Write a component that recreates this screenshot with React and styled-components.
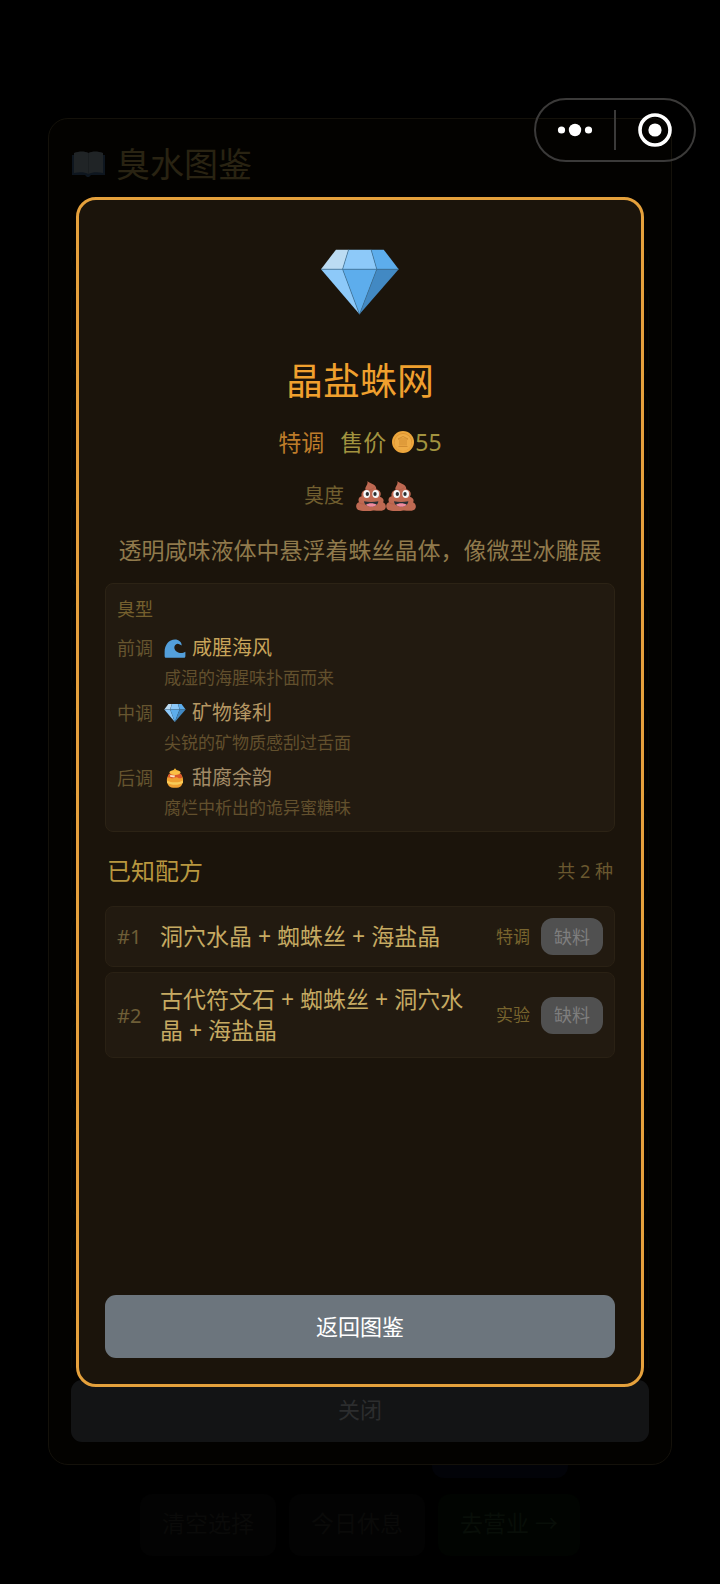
import React from 'react';
import styled, { createGlobalStyle } from 'styled-components';

const GlobalStyle = createGlobalStyle`
  * {
    box-sizing: border-box;
  }
  body {
    margin: 0;
    background: #000000;
    font-family: 'Noto Sans', 'Noto Sans CJK SC', sans-serif;
  }
  h1, h2, h3, p, ul, ol {
    margin: 0;
    padding: 0;
    font-weight: 400;
    list-style: none;
  }
  button {
    border: none;
    padding: 0;
    background: none;
    font-family: inherit;
    cursor: pointer;
  }
  svg {
    display: block;
    flex-shrink: 0;
  }
`;

const Page = styled.main`
  min-height: 100vh;
  display: flex;
  flex-direction: column;
  justify-content: flex-end;
  gap: 16px;
  padding-bottom: 28px;
`;

const BrewRow = styled.div`
  display: flex;
  justify-content: flex-end;
  padding-right: 152px;
`;

const ActionRow = styled.div`
  display: flex;
  justify-content: center;
  gap: 13px;
`;

const ActionButton = styled.button`
  min-width: 136px;
  height: 62px;
  padding: 0 22px 4px;
  border-radius: 12px;
  background: ${(props) => props.$background || '#030303'};
  color: ${(props) => props.$color || '#0a0a09'};
  font-size: 23px;
  line-height: 32px;
`;

const Overlay = styled.div`
  position: fixed;
  inset: 0;
  display: flex;
  padding: ${(props) => props.$padding};
`;

const BookPanel = styled.section`
  flex: 1;
  min-width: 0;
  display: flex;
  flex-direction: column;
  padding: 22px;
  background: #030200;
  border: 1px solid #14110a;
  border-radius: 20px;
`;

const BookHeader = styled.header`
  display: flex;
  align-items: center;
  gap: 10px;
  height: 46px;
`;

const BookTitle = styled.h1`
  font-size: 34px;
  line-height: 46px;
  color: #292312;
`;

const BookList = styled.ul`
  flex: 1;
  min-height: 0;
  overflow: hidden;
  display: flex;
  flex-direction: column;
  gap: 12px;
  margin: 58px 0 12px;
`;

const BookItem = styled.li`
  flex-shrink: 0;
  height: ${(props) => (props.$short ? '28px' : '93px')};
  border: 1px solid #030a03;
  border-radius: 12px;
`;

const CloseButton = styled.button`
  height: 62px;
  padding-bottom: 4px;
  border-radius: 11px;
  background: #131415;
  color: #2c2d2e;
  font-size: 22px;
  line-height: 32px;
`;

const Dialog = styled.section`
  flex: 1;
  min-width: 0;
  display: flex;
  flex-direction: column;
  padding: 25px 26px 26px;
  background: #1b140b;
  border: 3px solid #e5a13c;
  border-radius: 20px;
`;

const DialogHeader = styled.header`
  display: flex;
  flex-direction: column;
  align-items: center;
  gap: 22px;
`;

const IconBox = styled.div`
  height: 114px;
  display: flex;
  align-items: center;
`;

const DialogTitle = styled.h2`
  font-size: 37px;
  line-height: 40px;
  color: #f0a02e;
`;

const InfoRow = styled.div`
  display: flex;
  align-items: center;
  gap: 16px;
  font-size: 23px;
  line-height: 38px;
  color: #a2933f;
`;

const Rank = styled.span`
  color: #bd7c2a;
`;

const Price = styled.span`
  display: flex;
  align-items: center;

  svg {
    margin: 0 1px 0 6px;
  }
`;

const StinkRow = styled.div`
  display: flex;
  align-items: center;
  gap: 12px;
  font-size: 20px;
  line-height: 26px;
  color: #715f2f;
`;

const StinkLevel = styled.span`
  display: flex;
  height: 26px;
  align-items: center;
`;

const Description = styled.p`
  font-size: 23px;
  line-height: 38px;
  text-align: center;
  color: #907a4c;
`;

const ScentBox = styled.section`
  margin-top: 14px;
  padding: 11px 11px 8px;
  background: #221a10;
  border: 1px solid #2c2315;
  border-radius: 8px;
`;

const ScentTitle = styled.h3`
  margin-bottom: 10px;
  font-size: 18px;
  line-height: 28px;
  color: #75602e;
`;

const ScentList = styled.ul`
  display: flex;
  flex-direction: column;
  gap: 5px;
`;

const ScentItem = styled.li`
  display: grid;
  grid-template-columns: 36px 1fr;
  column-gap: 11px;
  line-height: 30px;
`;

const ScentStage = styled.span`
  font-size: 18px;
  color: #66552f;
`;

const ScentName = styled.span`
  display: flex;
  align-items: center;
  gap: 6px;
  font-size: 20px;
  color: ${(props) => props.$color};
`;

const ScentNote = styled.p`
  grid-column: 2;
  font-size: 17px;
  color: #62502d;
`;

const RecipeHeader = styled.div`
  display: flex;
  align-items: center;
  justify-content: space-between;
  margin: 23px 0 19px;
  padding: 0 2px;
  line-height: 32px;
`;

const RecipeTitle = styled.h3`
  font-size: 24px;
  color: #b8973f;
`;

const RecipeCount = styled.span`
  font-size: 18px;
  color: #6a582f;
`;

const RecipeList = styled.ol`
  flex: 1;
  display: flex;
  flex-direction: column;
  gap: 5px;
`;

const RecipeItem = styled.li`
  display: flex;
  align-items: center;
  padding: 11px;
  background: #221a10;
  border: 1px solid #2a2114;
  border-radius: 8px;
`;

const RecipeIndex = styled.span`
  width: 43px;
  font-size: 20px;
  color: #6e5e37;
`;

const RecipeName = styled.span`
  flex: 1;
  font-size: 23px;
  line-height: 31px;
  color: #c6aa62;
`;

const RecipeTag = styled.span`
  margin: 0 11px 0 22px;
  font-size: 17px;
  line-height: 26px;
  color: #78642e;
`;

const BrewButton = styled.button`
  width: 62px;
  height: 37px;
  border-radius: 12px;
  background: #505050;
  color: #7e7e7e;
  font-size: 18px;
  line-height: 28px;
  cursor: default;
`;

const BackButton = styled.button`
  height: 63px;
  padding-bottom: 2px;
  border-radius: 11px;
  background: #6c757d;
  color: #ffffff;
  font-size: 22px;
  line-height: 32px;
`;

const Capsule = styled.div`
  position: fixed;
  top: 98px;
  right: 24px;
  display: flex;
  align-items: center;
  width: 162px;
  height: 64px;
  border: 2px solid #3b3a39;
  border-radius: 32px;
`;

const CapsuleButton = styled.button`
  flex: 1;
  display: flex;
  align-items: center;
  justify-content: center;
`;

const CapsuleDivider = styled.span`
  width: 2px;
  height: 40px;
  background: #3b3a39;
`;

function BookIcon() {
  return (
    <svg width="35" height="26" viewBox="0 0 35 26" aria-hidden="true">
      <path d="M1 4h33v20H20l-2 2h-2l-2-2H1z" fill="#0e161f" />
      <path d="M3 2C8 0 14 0 17.500 2C21 0 27 0 32 2v20c-5-1-11-1-14.500 1C14 21 8 21 3 22z" fill="#202426" />
      <path d="M17.500 2v21" stroke="#1a1e20" strokeWidth="1" />
    </svg>
  );
}

function GemIcon({ width, height }) {
  return (
    <svg width={width} height={height} viewBox="32 26 235 197" aria-hidden="true">
      <path d="M77 27H115L97 86H32z" fill="#bcdcf3" />
      <path d="M115 27H183L200 86H97z" fill="#8dc9f9" />
      <path d="M183 27H221L266 86H200z" fill="#5dadec" />
      <path d="M32 86H97L148 222z" fill="#8dc9f9" />
      <path d="M97 86H200L148 222z" fill="#5dadec" />
      <path d="M200 86H266L148 222z" fill="#4289c3" />
      <path
        d="M32 86H266M115 27L97 86L148 222L200 86L183 27"
        fill="none"
        stroke="#3f7398"
        strokeWidth="2"
      />
    </svg>
  );
}

function CoinIcon() {
  return (
    <svg width="22" height="22" viewBox="0 0 22 22" aria-hidden="true">
      <circle cx="11" cy="11" r="11" fill="#eda63c" />
      <circle cx="11" cy="11" r="9" fill="#dc9230" />
      <circle cx="11" cy="11.500" r="8.500" fill="#eeab45" />
      <path d="M6 8l5-2.500L16 8zM6.500 15.500h9M8 9v5.500M10 9v5.500M12 9v5.500M14 9v5.500" fill="none" stroke="#d18c30" strokeWidth="1" />
    </svg>
  );
}

function PoopIcon() {
  return (
    <svg width="30" height="30" viewBox="0 0 90 90" aria-hidden="true">
      <path
        d="M34 0C39 8 62 8 61 25C74 28 77 39 72 47C83 51 85 58 81 64C93 70 93 87 77 89C66 91 58 87 48 89C35 91 20 91 10 88C-3 84-2 67 9 64C5 55 9 48 17 46C14 36 20 29 29 27C24 17 38 12 34 0z"
        fill="#bf6952"
      />
      <path d="M29 27C38 28 50 25 56 19M9 65C19 71 31 70 36 67" fill="none" stroke="#ad5a45" strokeWidth="2" />
      <ellipse cx="32" cy="39" rx="10" ry="12" fill="#f5f8fa" />
      <ellipse cx="59" cy="39" rx="10" ry="12" fill="#f5f8fa" />
      <ellipse cx="34" cy="39" rx="5" ry="6" fill="#292f33" />
      <ellipse cx="57" cy="39" rx="5" ry="6" fill="#292f33" />
      <path d="M24 61C37 64 54 64 67 61C66 71 58 77 46 77C34 77 25 71 24 61z" fill="#292f33" />
      <path d="M30 71C38 65 53 65 62 71C53 79 39 79 30 71z" fill="#f18ba0" />
    </svg>
  );
}

function WaveIcon() {
  return (
    <svg width="22" height="22" viewBox="0 0 36 36" aria-hidden="true">
      <path
        d="M35 24C31 27 25 27 21 24C15 20 16 12 22 11C25 11 27 13 29 14C29 8 24 4 18 4C8 4 1 13 1 24V31C1 33 2 34 4 34H32C34 34 35 33 35 31z"
        fill="#539fdb"
      />
    </svg>
  );
}

function HoneyIcon() {
  return (
    <svg width="22" height="22" viewBox="0 0 36 36" aria-hidden="true">
      <path d="M9 12C4 16 3 25 8 31C11 35 25 35 28 31C33 25 32 16 27 12z" fill="#f0a030" />
      <path d="M5 22C12 26 24 26 31 22V26C24 30 12 30 5 26z" fill="#f9cb58" />
      <path d="M8 11H28L30 17C27 19 25 19 22 17C18 16 15 20 11 18C8 16 7 18 6 17z" fill="#dd5a2b" />
      <path d="M10 13L18 14L17 17L10 16z" fill="#fbe3bd" />
      <ellipse cx="18" cy="9" rx="9" ry="4" fill="#fbc046" />
      <path d="M14 7L18 2L22 7z" fill="#f5b536" />
    </svg>
  );
}

const scents = [
  { stage: '前调', name: '咸腥海风', note: '咸湿的海腥味扑面而来', color: '#c8a45a', icon: <WaveIcon /> },
  { stage: '中调', name: '矿物锋利', note: '尖锐的矿物质感刮过舌面', color: '#b59763', icon: <GemIcon width={22} height={18} /> },
  { stage: '后调', name: '甜腐余韵', note: '腐烂中析出的诡异蜜糖味', color: '#a18a66', icon: <HoneyIcon /> },
];

const recipes = [
  { name: '洞穴水晶 + 蜘蛛丝 + 海盐晶', tag: '特调' },
  { name: '古代符文石 + 蜘蛛丝 + 洞穴水晶 + 海盐晶', tag: '实验' },
];

const bookItems = [0, 1, 2, 3, 4, 5, 6, 7, 8, 9, 10, 11];

function DrinkDialog() {
  return (
    <Dialog role="dialog" aria-labelledby="drink-title">
      <DialogHeader>
        <IconBox>
          <GemIcon width={78} height={66} />
        </IconBox>
        <DialogTitle id="drink-title">晶盐蛛网</DialogTitle>
        <InfoRow>
          <Rank>特调</Rank>
          <Price>
            售价
            <CoinIcon />
            55
          </Price>
        </InfoRow>
        <StinkRow>
          臭度
          <StinkLevel>
            <PoopIcon />
            <PoopIcon />
          </StinkLevel>
        </StinkRow>
        <Description>透明咸味液体中悬浮着蛛丝晶体，像微型冰雕展</Description>
      </DialogHeader>

      <ScentBox>
        <ScentTitle>臭型</ScentTitle>
        <ScentList>
          {scents.map((scent) => (
            <ScentItem key={scent.stage}>
              <ScentStage>{scent.stage}</ScentStage>
              <ScentName $color={scent.color}>
                {scent.icon}
                {scent.name}
              </ScentName>
              <ScentNote>{scent.note}</ScentNote>
            </ScentItem>
          ))}
        </ScentList>
      </ScentBox>

      <RecipeHeader>
        <RecipeTitle>已知配方</RecipeTitle>
        <RecipeCount>共 {recipes.length} 种</RecipeCount>
      </RecipeHeader>
      <RecipeList>
        {recipes.map((recipe, index) => (
          <RecipeItem key={recipe.name}>
            <RecipeIndex>#{index + 1}</RecipeIndex>
            <RecipeName>{recipe.name}</RecipeName>
            <RecipeTag>{recipe.tag}</RecipeTag>
            <BrewButton disabled>缺料</BrewButton>
          </RecipeItem>
        ))}
      </RecipeList>

      <BackButton>返回图鉴</BackButton>
    </Dialog>
  );
}

function App() {
  return (
    <>
      <GlobalStyle />
      <Page>
        <BrewRow>
          <ActionButton $background="#020308" aria-label="调制" />
        </BrewRow>
        <ActionRow>
          <ActionButton>清空选择</ActionButton>
          <ActionButton>今日休息</ActionButton>
          <ActionButton $background="#010401" $color="#080e08">去营业 →</ActionButton>
        </ActionRow>
      </Page>

      <Overlay $padding="118px 48px 119px">
        <BookPanel>
          <BookHeader>
            <BookIcon />
            <BookTitle>臭水图鉴</BookTitle>
          </BookHeader>
          <BookList>
            {bookItems.map((item) => (
              <BookItem key={item} $short={item === 0} />
            ))}
          </BookList>
          <CloseButton>关闭</CloseButton>
        </BookPanel>
      </Overlay>

      <Overlay $padding="197px 76px">
        <DrinkDialog />
      </Overlay>

      <Capsule>
        <CapsuleButton aria-label="更多">
          <svg width="36" height="14" viewBox="0 0 36 14">
            <circle cx="4.500" cy="7" r="3.600" fill="#ffffff" />
            <circle cx="18" cy="7" r="6.200" fill="#ffffff" />
            <circle cx="31.500" cy="7" r="3.600" fill="#ffffff" />
          </svg>
        </CapsuleButton>
        <CapsuleDivider />
        <CapsuleButton aria-label="关闭小程序">
          <svg width="34" height="34" viewBox="0 0 34 34">
            <circle cx="17" cy="17" r="15" fill="none" stroke="#ffffff" strokeWidth="3.600" />
            <circle cx="17" cy="17" r="6.600" fill="#ffffff" />
          </svg>
        </CapsuleButton>
      </Capsule>
    </>
  );
}

export default App;
